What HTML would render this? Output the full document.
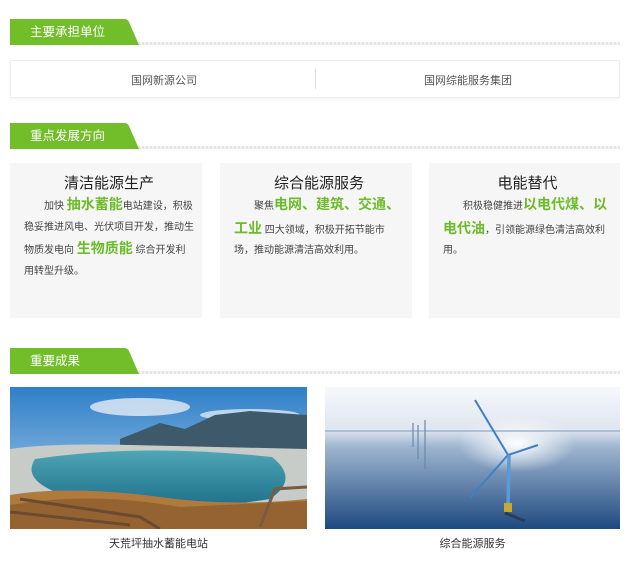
<!DOCTYPE html>
<html><head><meta charset="utf-8">
<style>
*{margin:0;padding:0;box-sizing:border-box}
body{width:639px;height:571px;background:#fff;font-family:"Liberation Sans","Noto Sans CJK SC",sans-serif;position:relative;overflow:hidden;color:#333}
.hd{position:absolute;left:10px;width:610px;height:27px}
.hd .line{position:absolute;left:0;right:0;bottom:0;height:3px;background:repeating-linear-gradient(90deg,#e6e6e6 0 2px,#f2f2f2 2px 4px)}
.hd svg{position:absolute;left:0;top:0}
.hd span{position:absolute;left:20px;top:6px;color:#fff;font-size:12.5px;line-height:16px}
.box{position:absolute;left:10px;top:60px;width:610px;height:38px;border:1px solid #eee;box-shadow:0 1px 2px rgba(0,0,0,.06)}
.box div{position:absolute;top:11px;font-size:11px;color:#555}
.card{position:absolute;top:163px;width:192px;height:155px;background:#f6f6f6;padding:0 8px 0 14px}
.card h3{font-weight:normal;font-size:15px;color:#222;text-align:center;margin-top:11px;line-height:19px}
.card p{font-size:10px;letter-spacing:0;line-height:20.5px;color:#444;margin-top:1px;white-space:nowrap}
.card b{color:#6cbb2a;font-size:14px;font-weight:bold;letter-spacing:0}
.img{position:absolute;top:387px;height:142px;overflow:hidden}
.cap{position:absolute;top:535px;font-size:11px;color:#333;text-align:center}
</style></head><body>

<div class="hd" style="top:18px"><div class="line"></div>
<svg width="130" height="27"><path d="M0 1 H114 Q118 1 119 4 L129 27 H0 Z" fill="#72bd2a"/></svg><span>主要承担单位</span></div>

<div class="box"><div style="left:120px">国网新源公司</div>
<div style="left:304px;top:8px;width:1px;height:20px;background:#ddd"></div>
<div style="left:413px">国网综能服务集团</div></div>

<div class="hd" style="top:122px"><div class="line"></div>
<svg width="130" height="27"><path d="M0 1 H114 Q118 1 119 4 L129 27 H0 Z" fill="#72bd2a"/></svg><span>重点发展方向</span></div>

<div class="card" style="left:10px"><h3>清洁能源生产</h3>
<p>　　加快 <b>抽水蓄能</b>电站建设，积极<br>稳妥推进风电、光伏项目开发，推动生<br>物质发电向 <b>生物质能</b> 综合开发利<br>用转型升级。</p></div>
<div class="card" style="left:220px"><h3>综合能源服务</h3>
<p>　　聚焦<b>电网、建筑、交通、</b><br><b>工业</b> 四大领域，积极开拓节能市<br>场，推动能源清洁高效利用。</p></div>
<div class="card" style="left:429px;width:191px"><h3>电能替代</h3>
<p>　　积极稳健推进<b>以电代煤、以</b><br><b>电代油</b>，引领能源绿色清洁高效利<br>用。</p></div>

<div class="hd" style="top:347px"><div class="line"></div>
<svg width="130" height="27"><path d="M0 1 H114 Q118 1 119 4 L129 27 H0 Z" fill="#72bd2a"/></svg><span>重要成果</span></div>

<div class="img" style="left:10px;width:297px">
<svg width="297" height="142" viewBox="0 0 297 142">
<defs><linearGradient id="sky" x1="0" y1="0" x2="0" y2="1"><stop offset="0" stop-color="#2f7fc9"/><stop offset="1" stop-color="#b8d4ea"/></linearGradient>
<linearGradient id="wt" x1="0" y1="0" x2="0" y2="1"><stop offset="0" stop-color="#4fa6b5"/><stop offset="1" stop-color="#1d6f8a"/></linearGradient></defs>
<rect width="297" height="142" fill="url(#sky)"/>
<ellipse cx="130" cy="20" rx="50" ry="9" fill="#e6eef6" opacity=".8"/>
<ellipse cx="240" cy="28" rx="50" ry="6" fill="#eef3f8" opacity=".7"/>
<path d="M110 52 L150 36 L175 42 L205 28 L240 24 L297 28 V80 H110 Z" fill="#3e5a6a"/>
<path d="M0 62 Q40 56 120 58 L297 62 V142 H0 Z" fill="#c8ccc8"/>
<path d="M25 72 Q130 56 262 70 Q290 92 260 112 Q150 130 60 110 Q10 95 25 72 Z" fill="url(#wt)"/>
<path d="M0 108 Q60 98 150 110 Q220 120 297 112 V142 H0 Z" fill="#b07a3c"/>
<path d="M0 118 Q80 104 170 120 L297 114 V142 H0 Z" fill="#8a5a2c" opacity=".7"/>
<path d="M10 112 L130 130 L150 142 M0 125 L120 138" stroke="#6b4a30" stroke-width="3" fill="none"/>
<path d="M250 140 L265 102 L297 100" stroke="#7a5a40" stroke-width="3" fill="none"/>
</svg></div>

<div class="img" style="left:325px;width:295px">
<svg width="295" height="142" viewBox="0 0 295 142">
<defs><linearGradient id="sea" x1="0" y1="0" x2="0" y2="1"><stop offset="0" stop-color="#f6f8fb"/><stop offset=".3" stop-color="#dfe6ef"/><stop offset=".42" stop-color="#9fb5d0"/><stop offset="1" stop-color="#1e4a80"/></linearGradient>
<radialGradient id="sun" cx=".65" cy=".4" r=".2"><stop offset="0" stop-color="#fff"/><stop offset="1" stop-color="#fff" stop-opacity="0"/></radialGradient></defs>
<rect width="295" height="142" fill="url(#sea)"/>
<rect width="295" height="142" fill="url(#sun)"/>
<path d="M0 44 H295" stroke="#9fb3cc" stroke-width="1.5"/>
<path d="M88 36 V60 M93 38 V72 M100 33 V82" stroke="#6a88aa" stroke-width="1.2"/>
<path d="M183 68 L150 13 M183 68 L213 58 M183 68 L145 111" stroke="#3f7fc4" stroke-width="2"/>
<path d="M184 68 L183 118" stroke="#5b9ad6" stroke-width="3.5"/>
<rect x="179" y="116" width="8" height="9" fill="#c8a830"/>
<path d="M180 126 L200 134" stroke="#2a3c5a" stroke-width="3"/>
</svg></div>

<div class="cap" style="left:10px;width:297px">天荒坪抽水蓄能电站</div>
<div class="cap" style="left:325px;width:295px">综合能源服务</div>
</body></html>
